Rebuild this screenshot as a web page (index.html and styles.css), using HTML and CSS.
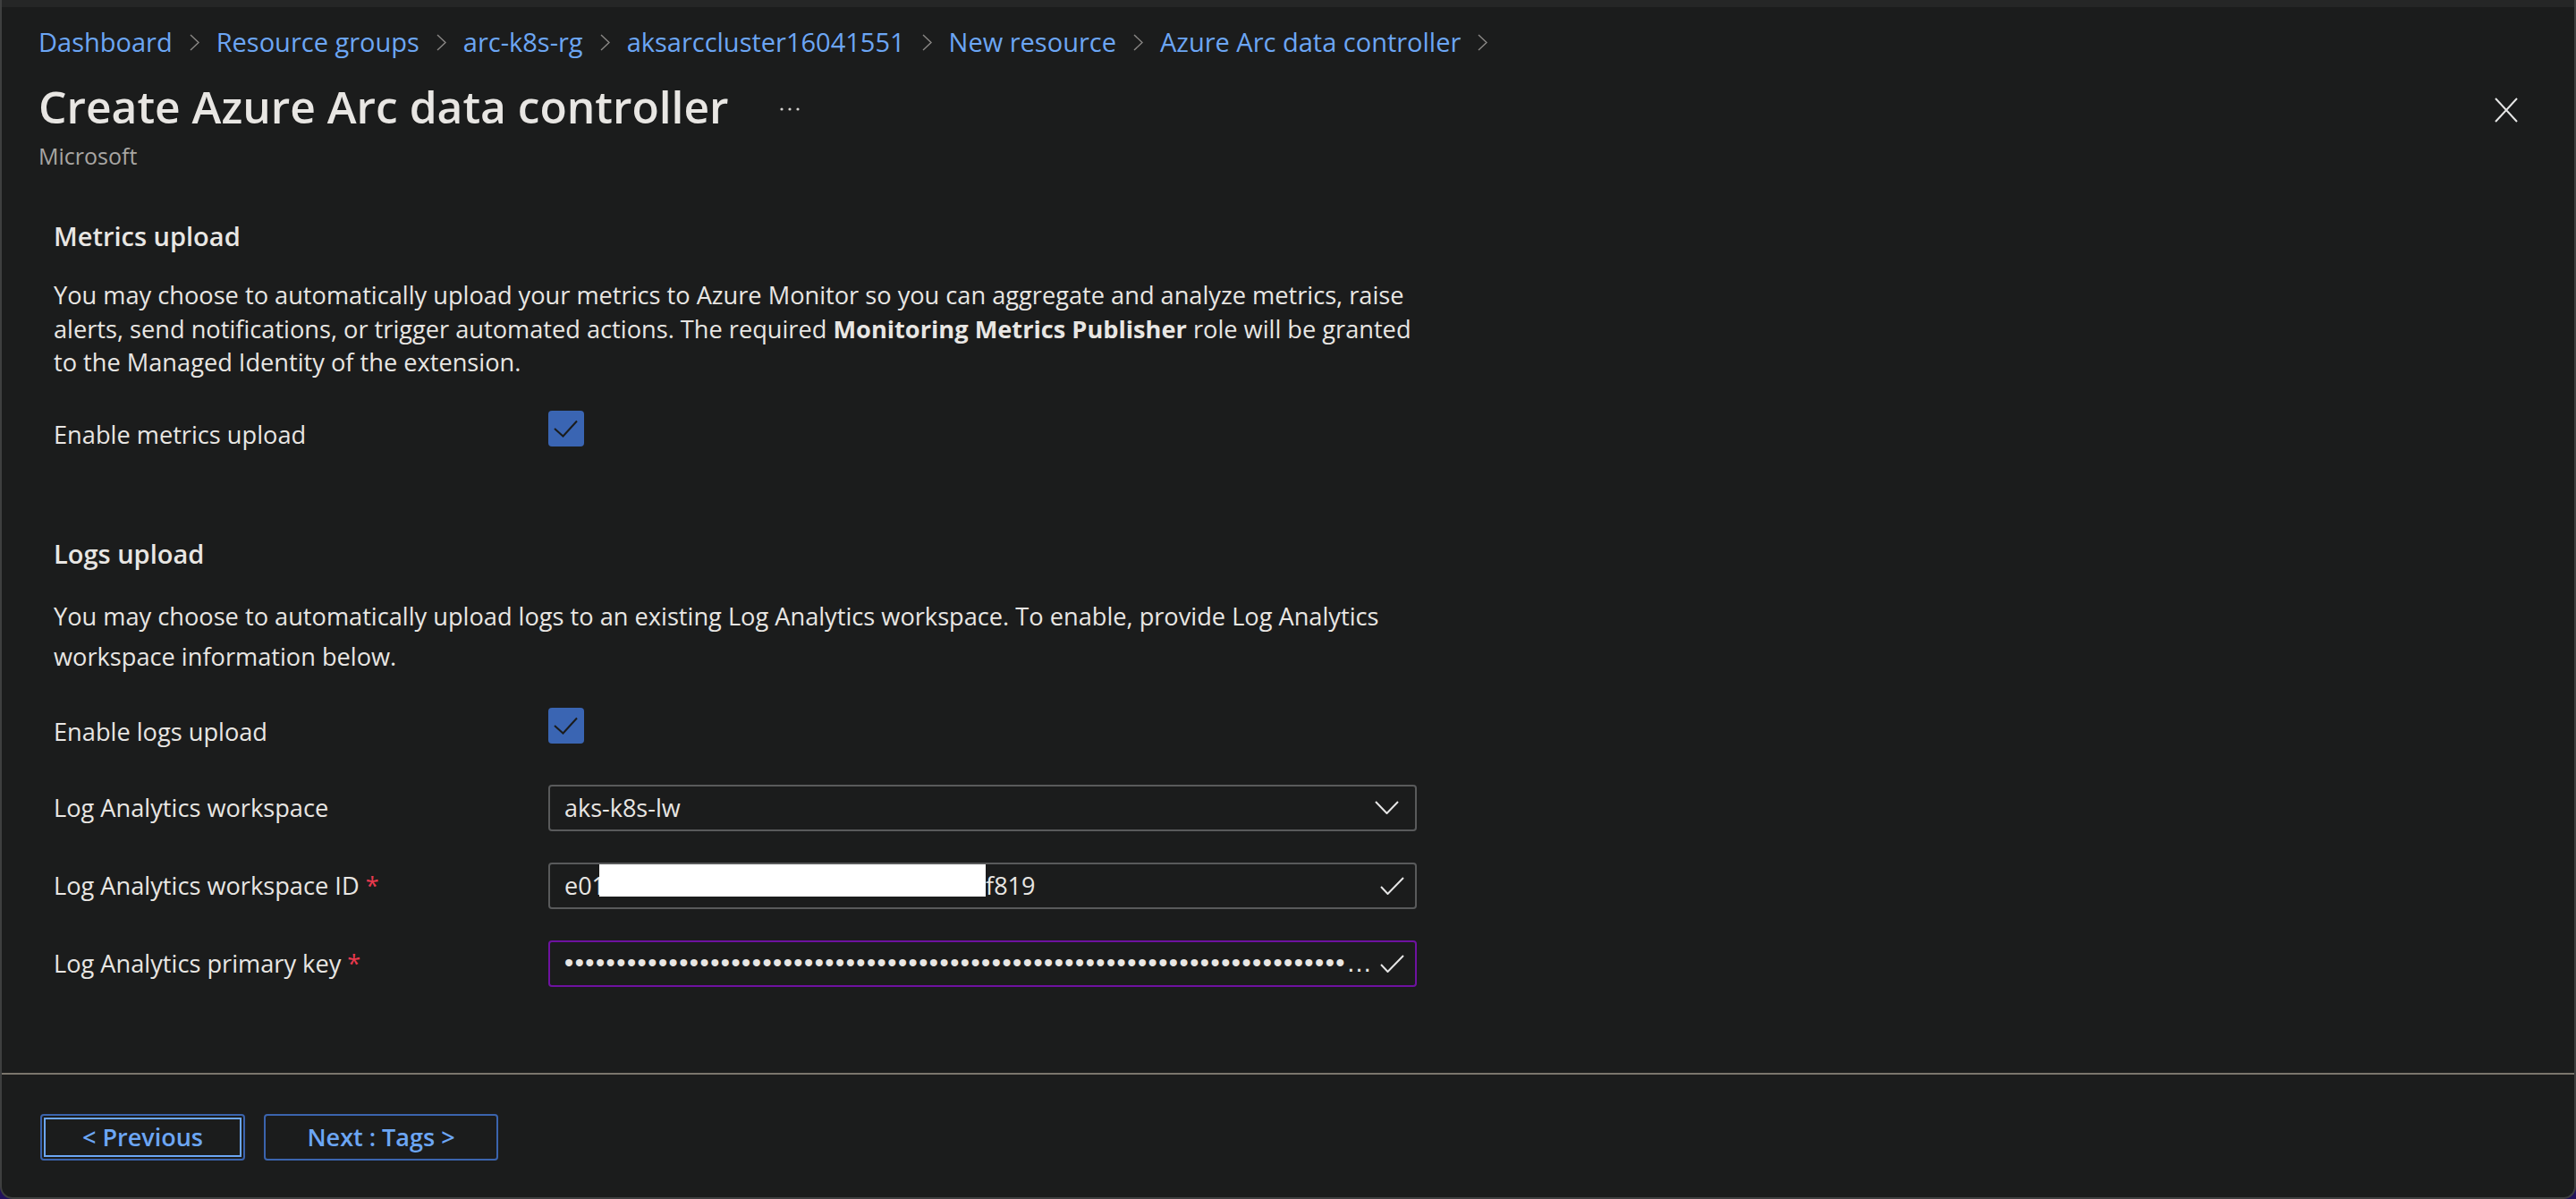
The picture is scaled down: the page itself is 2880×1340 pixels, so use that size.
FILE: index.html
```html
<!DOCTYPE html>
<html lang="en">
<head>
<meta charset="utf-8">
<title>Create Azure Arc data controller</title>
<link rel="stylesheet" href="styles.css">
</head>
<body>
<div class="panel">
  <div class="topbar"></div>
  <header class="header">
    <nav class="breadcrumb">
      <a class="crumb">Dashboard</a>
      <svg class="chev" width="11" height="19" viewBox="0 0 11 19"><path d="M1 1 L10 9.5 L1 18" /></svg>
      <a class="crumb">Resource groups</a>
      <svg class="chev" width="11" height="19" viewBox="0 0 11 19"><path d="M1 1 L10 9.5 L1 18" /></svg>
      <a class="crumb">arc-k8s-rg</a>
      <svg class="chev" width="11" height="19" viewBox="0 0 11 19"><path d="M1 1 L10 9.5 L1 18" /></svg>
      <a class="crumb">aksarccluster16041551</a>
      <svg class="chev" width="11" height="19" viewBox="0 0 11 19"><path d="M1 1 L10 9.5 L1 18" /></svg>
      <a class="crumb">New resource</a>
      <svg class="chev" width="11" height="19" viewBox="0 0 11 19"><path d="M1 1 L10 9.5 L1 18" /></svg>
      <a class="crumb">Azure Arc data controller</a>
      <svg class="chev" width="11" height="19" viewBox="0 0 11 19"><path d="M1 1 L10 9.5 L1 18" /></svg>
    </nav>
    <div class="title-row">
      <h1 class="title">Create Azure Arc data controller</h1>
      <svg class="more" width="22" height="4" viewBox="0 0 22 4"><circle cx="2" cy="2" r="1.6"/><circle cx="11" cy="2" r="1.6"/><circle cx="20" cy="2" r="1.6"/></svg>
      <svg class="close" width="26" height="28" viewBox="0 0 26 28"><path d="M1 1 L25 27 M25 1 L1 27" /></svg>
    </div>
    <div class="publisher">Microsoft</div>
  </header>

  <main class="content">
    <section class="section">
      <h2 class="section-title">Metrics upload</h2>
      <p class="desc desc-metrics">You may choose to automatically upload your metrics to Azure Monitor so you can aggregate and analyze metrics, raise<br>alerts, send notifications, or trigger automated actions. The required <strong>Monitoring Metrics Publisher</strong> role will be granted<br>to the Managed Identity of the extension.</p>
      <div class="row check-row">
        <span class="label">Enable metrics upload</span>
        <span class="checkbox"><svg width="40" height="40" viewBox="0 0 40 40"><path d="M7 20 L16.5 28.5 L32 11.5" /></svg></span>
      </div>
    </section>

    <section class="section section-logs">
      <h2 class="section-title">Logs upload</h2>
      <p class="desc desc-logs">You may choose to automatically upload logs to an existing Log Analytics workspace. To enable, provide Log Analytics<br>workspace information below.</p>
      <div class="row check-row">
        <span class="label">Enable logs upload</span>
        <span class="checkbox"><svg width="40" height="40" viewBox="0 0 40 40"><path d="M7 20 L16.5 28.5 L32 11.5" /></svg></span>
      </div>

      <div class="row field-row first-field">
        <span class="label">Log Analytics workspace</span>
        <div class="field">
          <span class="value">aks-k8s-lw</span>
          <svg class="dropdown" width="27" height="15" viewBox="0 0 27 15"><path d="M1 1 L13.5 14 L26 1" /></svg>
        </div>
      </div>

      <div class="row field-row">
        <span class="label">Log Analytics workspace ID <span class="req">*</span></span>
        <div class="field">
          <span class="value">e01<span class="redact"></span>f819</span>
          <svg class="ok" width="27" height="20" viewBox="0 0 27 20"><path d="M1 11 L8.5 19 L26 1" /></svg>
        </div>
      </div>

      <div class="row field-row">
        <span class="label">Log Analytics primary key <span class="req">*</span></span>
        <div class="field field-focus">
          <span class="value secret">••••••••••••••••••••••••••••••••••••••••••••••••••••••••••••••••••••••••••••••••••••••••••••••</span>
          <svg class="ok" width="27" height="20" viewBox="0 0 27 20"><path d="M1 11 L8.5 19 L26 1" /></svg>
        </div>
      </div>
    </section>
  </main>

  <footer class="footer">
    <button class="btn btn-prev btn-focus">&lt; Previous</button>
    <button class="btn btn-next">Next : Tags &gt;</button>
  </footer>
</div>
</body>
</html>
```

FILE: styles.css
```css
html, body {
  margin: 0;
  padding: 0;
  background: #22105c;
}

body {
  font-family: "Open Sans", "Noto Sans", sans-serif;
  color: #e8e6e3;
}

.panel {
  box-sizing: border-box;
  width: 2880px;
  height: 1340px;
  background: #1b1c1c;
  border: 2px solid #3e3f3f;
  border-top: 0;
  border-radius: 0 0 14px 14px;
  display: flex;
  flex-direction: column;
  overflow: hidden;
}

.topbar {
  height: 8px;
  background: #252626;
  flex: none;
}

.header {
  padding: 19px 63px 0 41px;
  flex: none;
}

.breadcrumb {
  display: flex;
  align-items: center;
  gap: 19px;
  font-size: 29px;
  line-height: 40px;
}

.crumb {
  color: #6ca6f4;
  text-decoration: none;
}

.chev path {
  fill: none;
  stroke: #8a8886;
  stroke-width: 1.4;
}

.title-row {
  display: flex;
  align-items: flex-start;
  margin-top: 22px;
}

.title {
  margin: 0;
  font-size: 49.7px;
  font-weight: 600;
  line-height: 60px;
  color: #e8e6e3;
}

.more {
  margin-left: 57px;
  margin-top: 31px;
  fill: #d4d2cf;
}

.close {
  margin-left: auto;
  margin-top: 20px;
}

.close path {
  fill: none;
  stroke: #e6e6e6;
  stroke-width: 2;
}

.publisher {
  margin-top: 8px;
  font-size: 25px;
  line-height: 34px;
  color: #a8a6a3;
}

.content {
  flex: 1;
  padding: 53px 0 0 58px;
}

.section-title {
  margin: 0;
  font-size: 29px;
  font-weight: 600;
  line-height: 40px;
}

.desc {
  margin: 27px 0 0;
  font-size: 27.2px;
  white-space: nowrap;
}

.desc strong {
  font-weight: 700;
}

.desc-metrics {
  line-height: 37.5px;
}

.desc-logs {
  line-height: 45px;
}

.section-logs {
  margin-top: 95px;
}

.row {
  display: grid;
  grid-template-columns: 553px 971px;
  font-size: 27.2px;
}

.check-row {
  align-items: start;
  margin-top: 35px;
}

.check-row .label {
  padding-top: 8px;
  line-height: 37.5px;
}

.checkbox {
  width: 40px;
  height: 40px;
  border-radius: 4px;
  background: #3a65b3;
  display: block;
}

.checkbox path {
  fill: none;
  stroke: #1b1c1c;
  stroke-width: 2;
}

.field-row {
  align-items: center;
  margin-top: 35px;
}

.first-field {
  margin-top: 40px;
}

.field-row .label {
  line-height: 37.5px;
}

.req {
  color: #e8394d;
}

.field {
  box-sizing: border-box;
  height: 52px;
  border: 2px solid #595a5b;
  border-radius: 4px;
  display: flex;
  align-items: center;
  padding: 0 12px 0 16px;
  font-size: 27px;
  color: #e8e6e3;
}

.field-focus {
  border-color: #6e12a0;
}

.value {
  flex: 1;
  min-width: 0;
  display: flex;
  align-items: center;
  white-space: nowrap;
  line-height: 37px;
}

.redact {
  display: inline-block;
  width: 432px;
  height: 36px;
  background: #ffffff;
  align-self: flex-start;
  margin-top: -5px;
  margin-left: -7px;
}

.secret {
  display: block;
  overflow: hidden;
  text-overflow: ellipsis;
  font-family: "Liberation Sans", sans-serif;
  font-size: 29px;
  letter-spacing: 1.5px;
  margin-right: 8px;
}

.dropdown {
  margin-right: 6px;
}

.dropdown path,
.ok path {
  fill: none;
  stroke: #e6e6e6;
  stroke-width: 2;
}

.footer {
  box-sizing: border-box;
  height: 139px;
  flex: none;
  border-top: 2px solid #7b766d;
  padding: 44px 0 0 43px;
  display: flex;
  align-items: flex-start;
  gap: 21px;
}

.btn {
  box-sizing: border-box;
  height: 52px;
  padding: 0;
  background: transparent;
  border: 2px solid #3b64ad;
  border-radius: 4px;
  color: #6ca6f4;
  font-family: "Open Sans", "Noto Sans", sans-serif;
  font-size: 27px;
  font-weight: 600;
  line-height: 48px;
  text-align: center;
}

.btn-prev {
  width: 229px;
}

.btn-next {
  width: 262px;
}

.btn-focus {
  outline: 2px solid #6ca6f4;
  outline-offset: -6px;
}
```
